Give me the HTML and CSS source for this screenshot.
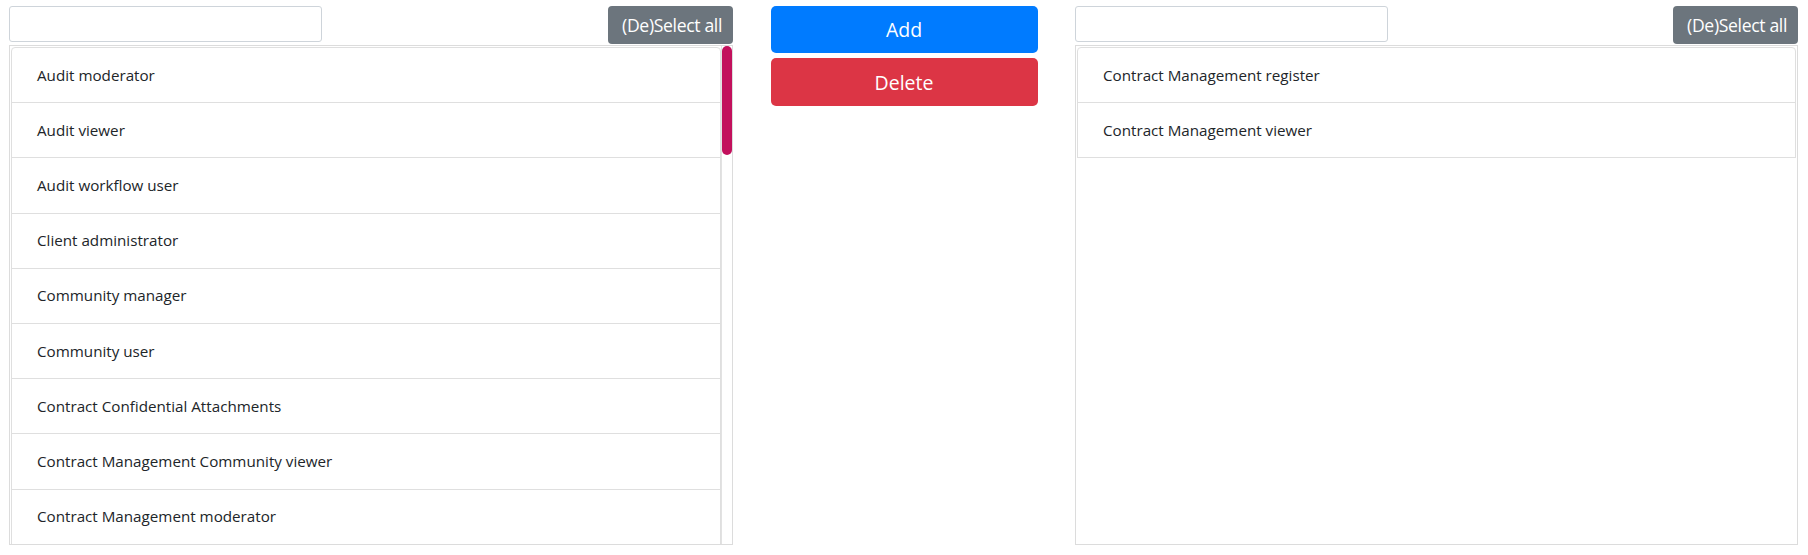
FILE: index.html
```html
<!DOCTYPE html>
<html lang="en">
<head>
    <meta charset="UTF-8">
    <meta name="viewport" content="width=device-width, initial-scale=1.0">
    <title>Roles</title>
    <link rel="stylesheet" href="styles.css">
</head>
<body>
    <div class="dual-list">
        <div class="list-col">
            <div class="list-head">
                <input type="text" class="filter">
                <button class="btn btn-grey">(De)Select all</button>
            </div>
            <div class="list-box">
                <ul class="list-group">
                    <li>Audit moderator</li>
                    <li>Audit viewer</li>
                    <li>Audit workflow user</li>
                    <li>Client administrator</li>
                    <li>Community manager</li>
                    <li>Community user</li>
                    <li>Contract Confidential Attachments</li>
                    <li>Contract Management Community viewer</li>
                    <li>Contract Management moderator</li>
                </ul>
                <div class="scroll-track"><div class="scroll-thumb"></div></div>
            </div>
        </div>

        <div class="actions">
            <button class="btn btn-blue">Add</button>
            <button class="btn btn-red">Delete</button>
        </div>

        <div class="list-col">
            <div class="list-head">
                <input type="text" class="filter">
                <button class="btn btn-grey">(De)Select all</button>
            </div>
            <div class="list-box">
                <ul class="list-group full">
                    <li>Contract Management register</li>
                    <li>Contract Management viewer</li>
                </ul>
            </div>
        </div>
    </div>
</body>
</html>
```

FILE: styles.css
```css
body {
    margin: 0;
    font-family: "Open Sans", Arial, sans-serif;
    color: #212529;
    background: white;
}
.dual-list {
    display: flex;
    justify-content: space-between;
    padding: 6px 10px 0 9px;
}
.list-col {
    width: 724px;
}
.list-col:last-child {
    width: 723px;
}
.list-head {
    display: flex;
    justify-content: space-between;
    align-items: flex-start;
    margin-bottom: 1px;
}
.filter {
    width: 313px;
    height: 36px;
    box-sizing: border-box;
    border: 1px solid #ced4da;
    border-radius: 3px;
    margin: 0;
    padding: 6px 10px;
    font-size: 15px;
}
.btn {
    border: none;
    color: white;
    cursor: pointer;
    font-family: "Open Sans", Arial, sans-serif;
}
.btn-grey {
    height: 38px;
    padding: 0 11px 0 14px;
    background-color: #6c757d;
    border-radius: 4px;
    font-size: 17.6px;
    letter-spacing: -0.35px;
}
.list-box {
    display: flex;
    align-items: flex-start;
    height: 500px;
    box-sizing: border-box;
    border: 1px solid #dcdcdc;
    overflow: hidden;
}
.list-group {
    flex: 1;
    list-style: none;
    margin: 1px 0 0 1px;
    padding: 0;
}
.list-group.full {
    margin-right: 1px;
}
.list-group li {
    padding: 15.5px 25px 16.5px;
    font-size: 15.2px;
    line-height: 22.2px;
    border: 1px solid #dfdfdf;
    margin-bottom: -1px;
    background: white;
}
.list-group li:first-child {
    border-radius: 4px 4px 0 0;
}
.scroll-track {
    width: 10px;
    height: 100%;
    border-left: 1px solid #e2e2e2;
}
.scroll-thumb {
    height: 109px;
    background: #c2105c;
    border-radius: 5px;
}
.actions {
    width: 267px;
    display: flex;
    flex-direction: column;
    gap: 5px;
}
.actions .btn {
    width: 100%;
    height: 47px;
    font-size: 19.5px;
    border-radius: 5px;
}
.actions .btn-red {
    height: 48px;
}
.btn-blue {
    background-color: #007bff;
}
.btn-red {
    background-color: #dc3545;
}
```
